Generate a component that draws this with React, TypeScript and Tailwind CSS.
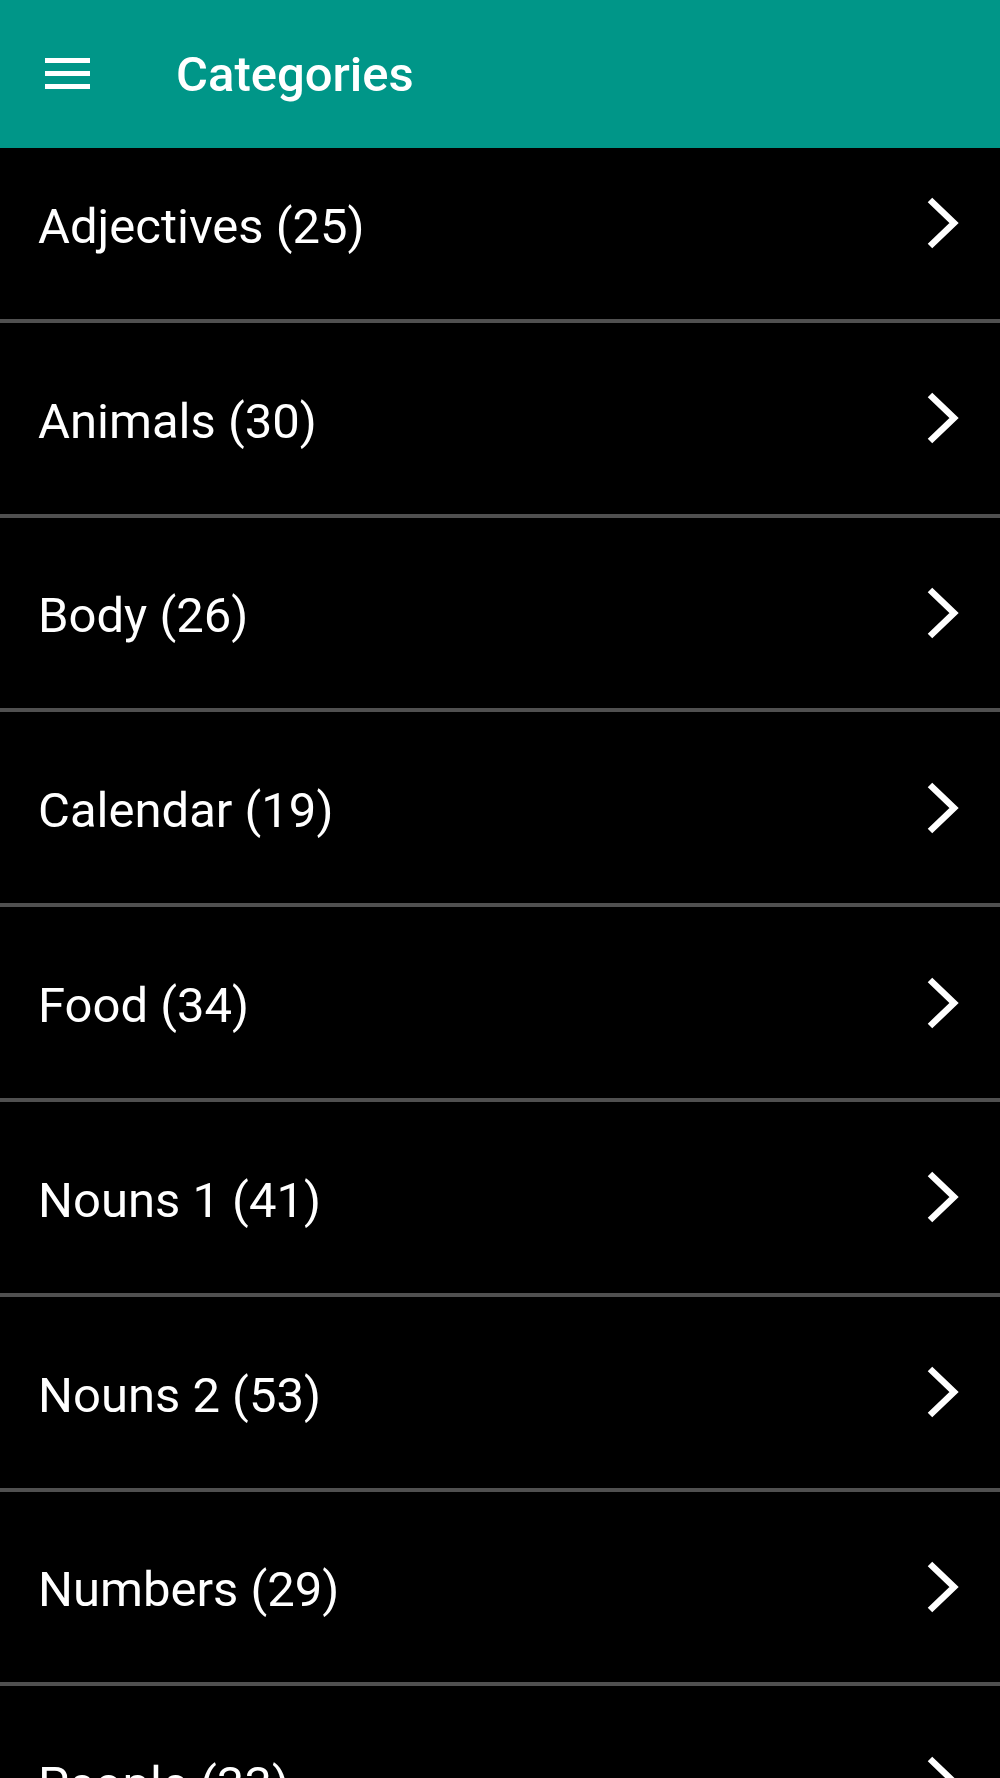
const categories = [
  "Adjectives (25)",
  "Animals (30)",
  "Body (26)",
  "Calendar (19)",
  "Food (34)",
  "Nouns 1 (41)",
  "Nouns 2 (53)",
  "Numbers (29)",
  "People (33)",
];

function MenuIcon() {
  return (
    <svg width="45" height="34" viewBox="0 0 45 34" className="shrink-0">
      <rect x="0" y="1" width="45" height="5" fill="#fff" />
      <rect x="0" y="14" width="45" height="5" fill="#fff" />
      <rect x="0" y="27" width="45" height="5" fill="#fff" />
    </svg>
  );
}

function Chevron() {
  return (
    <svg width="40" height="60" viewBox="0 0 40 60" className="shrink-0">
      <polyline
        points="8,7 32,30 8,53"
        fill="none"
        stroke="#fff"
        strokeWidth="6.5"
        strokeLinecap="butt"
        strokeLinejoin="miter"
      />
    </svg>
  );
}

export default function App() {
  return (
    <div className="flex flex-col w-[1000px] h-[1778px] overflow-hidden bg-black font-['Roboto',_'Liberation_Sans',_sans-serif]">
      <header className="relative z-10 flex flex-none items-center bg-[#009688] pl-[45px] h-[148px]">
        <MenuIcon />
        <h1 className="ml-[86px] font-medium text-[49px] text-white leading-none">Categories</h1>
      </header>
      <div className="flex-1 overflow-hidden">
        <ul className="-mt-[20px]">
          {categories.map((name) => (
            <li
              key={name}
              className="flex justify-between items-center px-[38px] border-[#505050] border-b-4 h-[194.8px]"
            >
              <span className="mt-[6px] text-[49px] text-white leading-none">{name}</span>
              <Chevron />
            </li>
          ))}
        </ul>
      </div>
    </div>
  );
}
